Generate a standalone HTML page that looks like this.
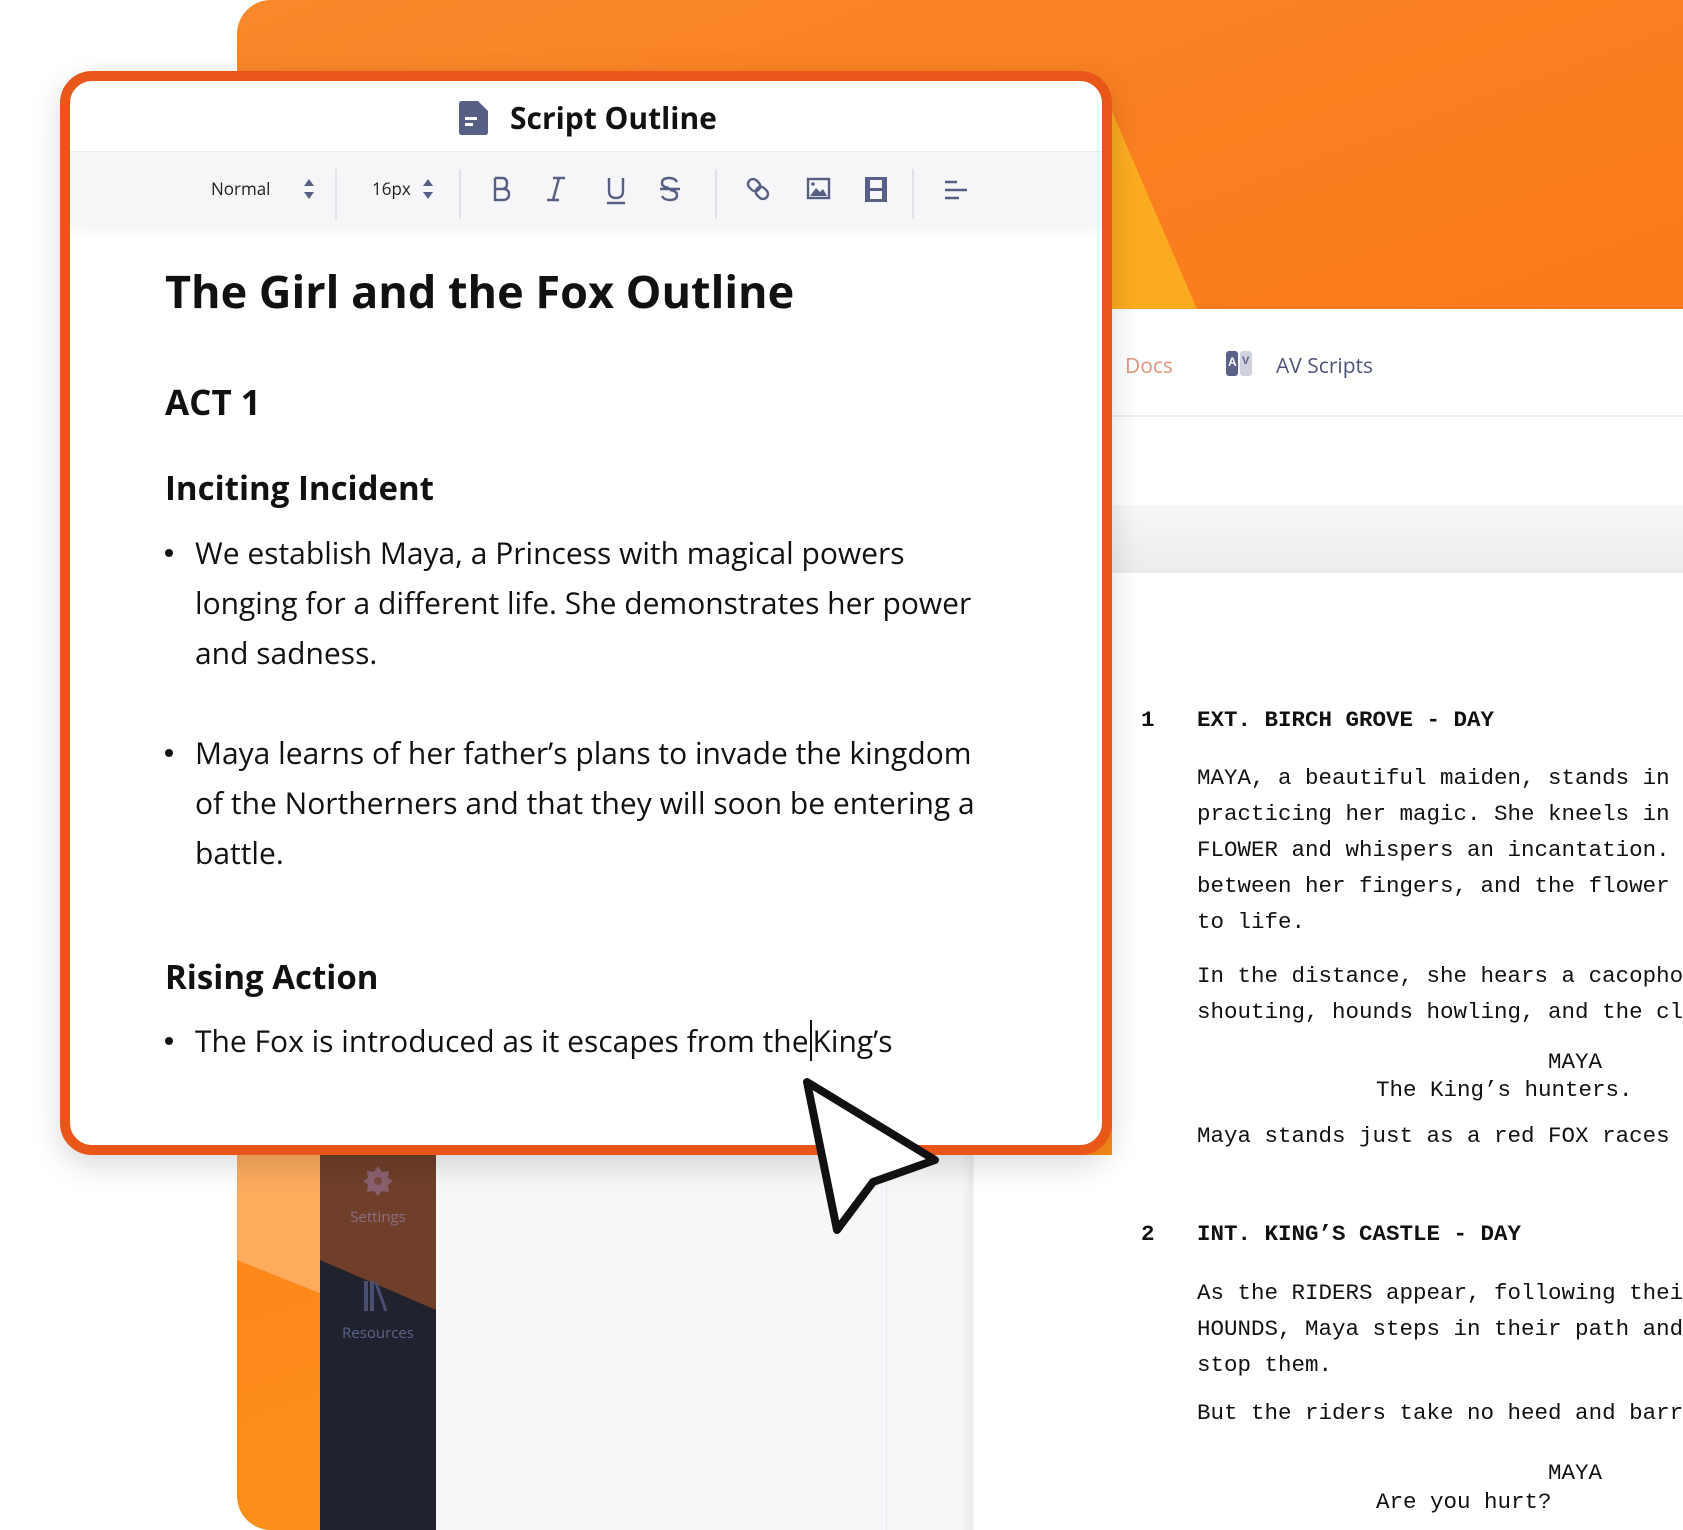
<!DOCTYPE html>
<html><head><meta charset="utf-8"><style>
*{margin:0;padding:0;box-sizing:border-box}
body{width:1683px;height:1530px;position:relative;overflow:hidden;background:#fff;font-family:"Liberation Sans",sans-serif}
.abs{position:absolute}
.os{font-family:"Open Sans","Liberation Sans",sans-serif}
.mono{font-family:"Liberation Mono",monospace;font-size:22.5px;color:#111;white-space:pre}
</style></head><body>
<div class="abs" style="left:237px;top:0;width:1446px;height:1530px;border-radius:34px 0 0 34px;overflow:hidden;background:linear-gradient(160deg,#f9882a 0%,#fb7a1a 40%,#fd8c1a 70%,#f9a21c 100%)">
  <svg class="abs" style="left:0;top:0" width="1446" height="1530">
    <polygon points="820,100 870,100 960,309 860,309" fill="#fbb020" opacity="0.9"/>
    <polygon points="0,1155 0,1260 200,1340 199,1155" fill="#fdc58a" opacity="0.6"/>
  </svg>
</div>
<div class="abs" style="left:1112px;top:309px;width:571px;height:1221px;background:#fff"></div>
<div class="abs os" style="left:1125px;top:352px;font-size:21px;color:#e0957a">Docs</div>
<div class="abs" style="left:1226px;top:351px;width:12px;height:25px;background:#5a6288;border-radius:3px"></div>
<div class="abs" style="left:1240px;top:351px;width:12px;height:25px;background:#cfd2dc;border-radius:3px"></div>
<div class="abs" style="left:1228px;top:355px;font-size:12px;color:#fff;font-weight:bold">A</div>
<div class="abs" style="left:1242px;top:355px;font-size:11px;color:#5a6288;font-weight:bold">V</div>
<div class="abs os" style="left:1276px;top:352px;font-size:21px;color:#4c5478">AV Scripts</div>
<div class="abs" style="left:1112px;top:415px;width:571px;height:2px;background:#eeeef0"></div>
<div class="abs" style="left:1112px;top:505px;width:571px;height:68px;background:linear-gradient(#f7f7f8,#ececee)"></div>
<div class="abs" style="left:436px;top:1155px;width:676px;height:375px;background:#f7f7f9"></div>
<div class="abs" style="left:973px;top:1155px;width:139px;height:375px;background:#fff"></div>
<div class="abs" style="left:886px;top:1155px;width:1px;height:375px;background:#e8e8ec"></div>
<div class="abs" style="left:960px;top:573px;width:14px;height:957px;background:linear-gradient(90deg,rgba(0,0,0,0),rgba(0,0,0,0.05))"></div>
<div class="abs" style="left:320px;top:1155px;width:116px;height:375px;background:#20222f;overflow:hidden">
  <svg class="abs" style="left:0;top:0" width="116" height="375"><polygon points="0,0 116,0 116,155 0,105" fill="#8a4a2a" opacity="0.75"/></svg>
  <svg class="abs" style="left:42px;top:10px" width="32" height="32" viewBox="0 0 32 32"><polygon points="16,1 20,7 27,6 26,13 31,16 26,20 27,27 20,26 16,31 12,26 5,27 6,20 1,16 6,13 5,6 12,7" fill="#8a6070"/><circle cx="16" cy="16" r="4" fill="#7a4a3e"/></svg>
  <div class="abs os" style="left:0;top:52px;width:116px;text-align:center;font-size:15px;color:#8d6f88">Settings</div>
  <svg class="abs" style="left:42px;top:126px" width="34" height="30"><rect x="2" y="0" width="4" height="30" fill="#4a4f72"/><rect x="8" y="0" width="4" height="30" fill="#4a4f72"/><line x1="14" y1="2" x2="24" y2="30" stroke="#4a4f72" stroke-width="3"/></svg>
  <div class="abs os" style="left:0;top:168px;width:116px;text-align:center;font-size:15px;color:#5e6688">Resources</div>
</div>
<div class="abs mono" style="left:1141px;top:707px;font-weight:bold">1</div>
<div class="abs mono" style="left:1197px;top:707px;font-weight:bold">EXT. BIRCH GROVE - DAY</div>
<div class="abs mono" style="left:1197px;top:760px;line-height:36px">MAYA, a beautiful maiden, stands in
practicing her magic. She kneels in
FLOWER and whispers an incantation.
between her fingers, and the flower
to life.</div>
<div class="abs mono" style="left:1197px;top:958px;line-height:36px">In the distance, she hears a cacopho
shouting, hounds howling, and the cl</div>
<div class="abs mono" style="left:1548px;top:1049px">MAYA</div>
<div class="abs mono" style="left:1376px;top:1077px">The King’s hunters.</div>
<div class="abs mono" style="left:1197px;top:1123px">Maya stands just as a red FOX races</div>
<div class="abs mono" style="left:1141px;top:1221px;font-weight:bold">2</div>
<div class="abs mono" style="left:1197px;top:1221px;font-weight:bold">INT. KING’S CASTLE - DAY</div>
<div class="abs mono" style="left:1197px;top:1275px;line-height:36px">As the RIDERS appear, following thei
HOUNDS, Maya steps in their path and
stop them.</div>
<div class="abs mono" style="left:1197px;top:1400px">But the riders take no heed and barr</div>
<div class="abs mono" style="left:1548px;top:1460px">MAYA</div>
<div class="abs mono" style="left:1376px;top:1489px">Are you hurt?</div>
<div class="abs" style="left:60px;top:71px;width:1052px;height:1084px;border:10px solid #e8561a;border-radius:32px;background:#fff;overflow:hidden;box-shadow:0 10px 30px rgba(0,0,0,0.15)">
  <svg class="abs" style="left:389px;top:20px" width="30" height="34" viewBox="0 0 30 34"><path d="M3 0H19L29 10V31Q29 34 26 34H3Q0 34 0 31V3Q0 0 3 0Z" fill="#575f85"/><rect x="6" y="16" width="12" height="3" fill="#fff"/><rect x="6" y="22" width="8" height="3" fill="#fff"/></svg>
  <div class="abs os" style="left:440px;top:16px;font-size:30px;font-weight:bold;color:#111">Script Outline</div>
  <div class="abs" style="left:0;top:71px;width:1032px;height:74px;background:#f6f6f8;box-shadow:0 6px 12px rgba(0,0,0,0.04)"></div>
  <div class="abs" style="left:0;top:70px;width:1032px;height:1px;background:#ececef"></div>
  <div class="abs os" style="left:141px;top:96px;font-size:17px;color:#222">Normal</div>
  <svg class="abs" style="left:233px;top:97px" width="12" height="22"><polygon points="6,1 11,8 1,8" fill="#575f85"/><polygon points="6,21 11,14 1,14" fill="#575f85"/></svg>
  <div class="abs" style="left:265px;top:88px;width:2px;height:50px;background:#e2e2e6"></div>
  <div class="abs os" style="left:302px;top:96px;font-size:17px;color:#222">16px</div>
  <svg class="abs" style="left:352px;top:97px" width="12" height="22"><polygon points="6,1 11,8 1,8" fill="#575f85"/><polygon points="6,21 11,14 1,14" fill="#575f85"/></svg>
  <div class="abs" style="left:389px;top:88px;width:2px;height:50px;background:#e2e2e6"></div>
  <svg class="abs" style="left:413px;top:91px" width="520" height="34" fill="none" stroke="#575f85" stroke-width="2.4">
    <path d="M12 6V28H20Q26 28 26 22Q26 17 20 17H12M12 6H19Q24 6 24 11.5Q24 17 19 17"/>
    <path d="M70 6H82M64 28H76M76 6L70 28"/>
    <path d="M126 6V19Q126 26 133 26Q140 26 140 19V6M124 31H142"/>
    <path d="M194 10Q192 6 186 6Q179 6 179 11Q179 15 186 16M197 17H177M187 18Q194 19 194 23Q194 28 187 28Q181 28 179 24"/>
    <g transform="translate(275,17) rotate(-45)"><rect x="-5" y="-12" width="10" height="13" rx="5"/><rect x="-5" y="-1" width="10" height="13" rx="5"/></g>
    <rect x="325" y="7" width="21" height="19"/><path d="M327 24L333 16L337 20L340 17L344 24Z" fill="#575f85" stroke="none"/><circle cx="330" cy="12" r="1.8" fill="#575f85" stroke="none"/>
    <rect x="382" y="5" width="22" height="25" fill="#575f85" stroke="none"/><rect x="387" y="8" width="12" height="8" fill="#f6f6f8" stroke="none"/><rect x="387" y="19" width="12" height="8" fill="#f6f6f8" stroke="none"/>
    <path d="M462 10H474M462 18H484M462 26H476"/>
  </svg>
  <div class="abs" style="left:645px;top:88px;width:2px;height:50px;background:#e2e2e6"></div>
  <div class="abs" style="left:842px;top:88px;width:2px;height:50px;background:#e2e2e6"></div>
  <div class="abs os" style="left:95px;top:180px;font-size:45px;font-weight:bold;color:#111">The Girl and the Fox Outline</div>
  <div class="abs os" style="left:95px;top:298px;font-size:35px;font-weight:bold;color:#111">ACT 1</div>
  <div class="abs os" style="left:95px;top:384px;font-size:33px;font-weight:bold;color:#111">Inciting Incident</div>
  <div class="abs os" style="left:125px;top:447px;width:792px;font-size:30px;line-height:50px;color:#111">We establish Maya, a Princess with magical powers longing for a different life. She demonstrates her power and sadness.</div>
  <div class="abs os" style="left:125px;top:647px;width:792px;font-size:30px;line-height:50px;color:#111">Maya learns of her father’s plans to invade the kingdom of the Northerners and that they will soon be entering a battle.</div>
  <div class="abs os" style="left:95px;top:873px;font-size:33px;font-weight:bold;color:#111">Rising Action</div>
  <div class="abs os" style="left:125px;top:935px;width:880px;font-size:30px;line-height:50px;color:#111">The Fox is introduced as it escapes from the<span style="border-left:2px solid #111;margin-left:1px;padding-left:1px">King’s</span></div>
  <div class="abs" style="left:95px;top:468px;width:8px;height:8px;border-radius:50%;background:#111"></div>
  <div class="abs" style="left:95px;top:668px;width:8px;height:8px;border-radius:50%;background:#111"></div>
  <div class="abs" style="left:95px;top:956px;width:8px;height:8px;border-radius:50%;background:#111"></div>
</div>
<svg class="abs" style="left:795px;top:1072px" width="160" height="170"><path d="M12 10L140 88L78 110L42 158Z" fill="#fff" stroke="#111" stroke-width="8" stroke-linejoin="round"/></svg>
</body></html>
